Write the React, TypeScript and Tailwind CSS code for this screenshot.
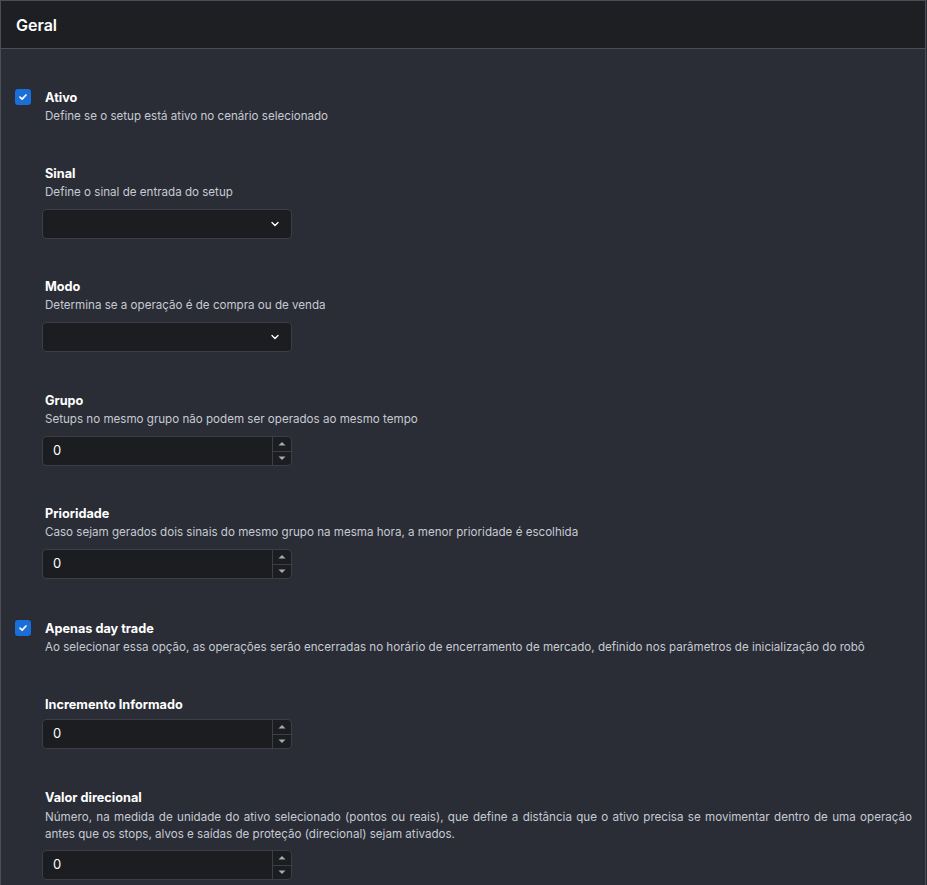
import React from "react";

const font = { fontFamily: "Inter, 'Noto Sans', sans-serif" };

function Check() {
  return (
    <div className="w-4 h-4 rounded-[3px] bg-[#1a6ed8] flex items-center justify-center shrink-0 mt-[2px]">
      <svg width="10" height="10" viewBox="0 0 10 10">
        <path d="M2 5.2 L4.1 7.2 L8 3" stroke="white" strokeWidth="1.7" fill="none" strokeLinecap="round" strokeLinejoin="round" />
      </svg>
    </div>
  );
}

function CheckRow({ label, desc, className = "" }: { label: string; desc: string; className?: string }) {
  return (
    <div className={"flex gap-[14px] " + className}>
      <Check />
      <div className="pt-[1px]">
        <div className="text-[12.7px] font-bold text-white leading-[20px]">{label}</div>
        <div className="text-[11.6px] text-[#c6cad3] leading-[17px]">{desc}</div>
      </div>
    </div>
  );
}

function Select() {
  return (
    <div className="w-[250px] h-[30px] rounded-[4px] bg-[#1c1d21] border border-[#3c3f48] flex items-center justify-end pr-[11px]">
      <svg width="10" height="10" viewBox="0 0 10 10">
        <path d="M2 3.5 L5 6.5 L8 3.5" stroke="white" strokeWidth="1.4" fill="none" strokeLinecap="round" strokeLinejoin="round" />
      </svg>
    </div>
  );
}

function NumberInput() {
  return (
    <div className="w-[250px] h-[30px] rounded-[4px] bg-[#1c1d21] border border-[#3c3f48] flex">
      <div className="flex-1 flex items-center pl-[10px] text-[13px] text-white">0</div>
      <div className="w-[19px] border-l border-[#3c3f48] flex flex-col">
        <div className="flex-1 flex items-center justify-center border-b border-[#3c3f48]">
          <svg width="8" height="5" viewBox="0 0 8 5"><path d="M0.5 4.5 L4 1 L7.5 4.5 Z" fill="#a6aab3" /></svg>
        </div>
        <div className="flex-1 flex items-center justify-center">
          <svg width="8" height="5" viewBox="0 0 8 5"><path d="M0.5 0.5 L4 4 L7.5 0.5 Z" fill="#a6aab3" /></svg>
        </div>
      </div>
    </div>
  );
}

function Field({
  label,
  desc,
  children,
  className = "",
  descClass = "",
  inputClass = "",
}: {
  label: string;
  desc?: string;
  children: React.ReactNode;
  className?: string;
  descClass?: string;
  inputClass?: string;
}) {
  return (
    <div className={"ml-[27px] " + className}>
      <div className="pl-[3px] pt-[1px] text-[12.7px] font-bold text-white leading-[20px]">{label}</div>
      {desc ? (
        <div className={"pl-[3px] text-[11.6px] text-[#c6cad3] leading-[17px] text-justify " + descClass}>{desc}</div>
      ) : null}
      <div className={inputClass || (desc ? "mt-[8px]" : "mt-[4px]")}>{children}</div>
    </div>
  );
}

export default function App() {
  return (
    <div className="w-[927px] h-[885px] bg-[#2a2d35] overflow-hidden" style={font}>
      <div className="w-[926px] h-[885px] border-l border-t border-r border-[#4b4e59] bg-[#2a2d35]">
        <div className="h-[48px] bg-[#1e1f23] border-b border-[#4b4e59] flex items-center pl-[15px]">
          <span className="text-[16px] font-semibold text-white">Geral</span>
        </div>
        <div className="pl-[14px] pr-[13px] pt-[38px]">
          <CheckRow label="Ativo" desc="Define se o setup está ativo no cenário selecionado" />
          <Field label="Sinal" desc="Define o sinal de entrada do setup" className="mt-[38px]">
            <Select />
          </Field>
          <Field label="Modo" desc="Determina se a operação é de compra ou de venda" className="mt-[37px]">
            <Select />
          </Field>
          <Field label="Grupo" desc="Setups no mesmo grupo não podem ser operados ao mesmo tempo" className="mt-[38px]">
            <NumberInput />
          </Field>
          <Field label="Prioridade" desc="Caso sejam gerados dois sinais do mesmo grupo na mesma hora, a menor prioridade é escolhida" className="mt-[37px]">
            <NumberInput />
          </Field>
          <CheckRow
            label="Apenas day trade"
            desc="Ao selecionar essa opção, as operações serão encerradas no horário de encerramento de mercado, definido nos parâmetros de inicialização do robô"
            className="mt-[39px]"
          />
          <Field label="Incremento Informado" className="mt-[38px]">
            <NumberInput />
          </Field>
          <Field
            label="Valor direcional"
            desc="Número, na medida de unidade do ativo selecionado (pontos ou reais), que define a distância que o ativo precisa se movimentar dentro de uma operação antes que os stops, alvos e saídas de proteção (direcional) sejam ativados."
            className="mt-[38px]"
            descClass="pt-[1px]"
            inputClass="mt-[7px]"
          >
            <NumberInput />
          </Field>
        </div>
      </div>
    </div>
  );
}
